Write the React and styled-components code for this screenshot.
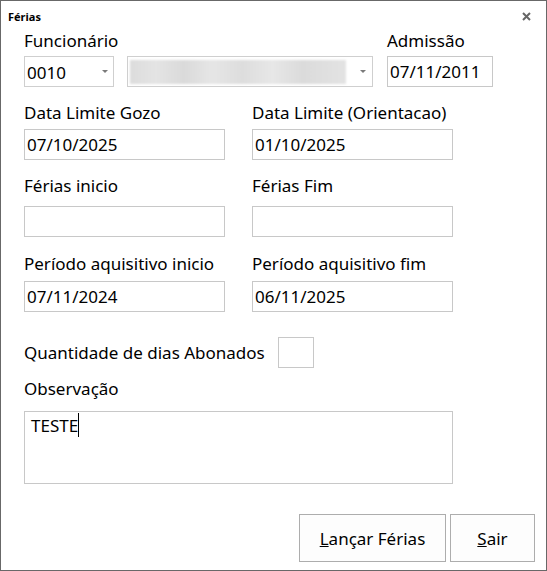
import styled, { createGlobalStyle } from 'styled-components';

const GlobalStyle = createGlobalStyle`
  html, body {
    margin: 0;
    padding: 0;
    background: #fff;
  }
  body {
    font-family: "Noto Sans", sans-serif;
    color: #000;
  }
`;

const Window = styled.div`
  box-sizing: border-box;
  width: 547px;
  height: 571px;
  border: 1px solid #686868;
  background: #fff;
  display: flex;
  flex-direction: column;
`;

const TitleBar = styled.div`
  height: 30px;
  display: flex;
  align-items: center;
  justify-content: space-between;
  padding: 0 15px 0 7px;
`;

const Title = styled.span`
  font-size: 11px;
  font-weight: 700;
`;

const CloseButton = styled.span`
  display: flex;
  width: 9px;
  height: 9px;
`;

const Body = styled.div`
  flex: 1;
  display: flex;
  flex-direction: column;
  padding: 0 11px 8px 23px;
`;

const Row = styled.div`
  display: flex;
  align-items: ${(p) => p.$align || 'flex-start'};
  gap: ${(p) => p.$gap ?? 27}px;
  margin-top: ${(p) => p.$top || 0}px;
`;

const Field = styled.div`
  display: flex;
  flex-direction: column;
`;

const Label = styled.label`
  display: block;
  font-size: 17px;
  line-height: 20px;
  margin-bottom: ${(p) => p.$gap ?? 6}px;
  width: ${(p) => (p.$width ? `${p.$width}px` : 'auto')};
`;

const Input = styled.input`
  box-sizing: border-box;
  width: ${(p) => p.$width || 201}px;
  height: 31px;
  border: 1px solid #c8c8c8;
  padding: 0 2px;
  margin: 0;
  font-family: "Noto Sans", sans-serif;
  font-size: 17px;
  color: #000;
  background: #fff;
  outline: none;
`;

const Combos = styled.div`
  display: flex;
  gap: 13px;
`;

const Combo = styled.div`
  box-sizing: border-box;
  width: ${(p) => p.$width}px;
  height: 31px;
  border: 1px solid #cfcfcf;
  display: flex;
  align-items: center;
  justify-content: space-between;
  padding: 2px ${(p) => p.$arrowGap ?? 5}px 0 2px;
  font-size: 17px;
`;

const Arrow = styled.span`
  width: 0;
  height: 0;
  border-left: 3px solid transparent;
  border-right: 3px solid transparent;
  border-top: 3px solid #7a7a7a;
  margin-top: -2px;
`;

const BlurredName = styled.div`
  width: 216px;
  height: 24px;
  margin-top: -2px;
  background: linear-gradient(
    90deg,
    #dcdcdc 0%,
    #e4e4e4 12%,
    #dadada 25%,
    #e6e6e6 38%,
    #dddddd 52%,
    #e7e7e7 66%,
    #dbdbdb 80%,
    #e3e3e3 100%
  );
  filter: blur(1px);
`;

const QuantityBox = styled.div`
  box-sizing: border-box;
  width: 36px;
  height: 31px;
  border: 1px solid #c8c8c8;
`;

const Memo = styled.div`
  box-sizing: border-box;
  width: 429px;
  height: 73px;
  border: 1px solid #c8c8c8;
  padding: 4px 6px;
  font-size: 17px;
  line-height: 20px;
`;

const Caret = styled.span`
  display: inline-block;
  width: 1px;
  height: 24px;
  background: #000;
  vertical-align: top;
  margin-top: -3px;
`;

const Footer = styled.div`
  margin-top: auto;
  display: flex;
  justify-content: flex-end;
  gap: 4px;
`;

const Button = styled.button`
  box-sizing: border-box;
  width: ${(p) => p.$width}px;
  height: 48px;
  border: 1px solid #adadad;
  background: #fdfdfd;
  font-family: "Noto Sans", sans-serif;
  font-size: 17px;
  color: #000;
  padding: 0;
  cursor: pointer;
`;

export default function App() {
  return (
    <>
      <GlobalStyle />
      <Window>
        <TitleBar>
          <Title>Férias</Title>
          <CloseButton>
            <svg width="9" height="9" viewBox="0 0 9 9">
              <path d="M1 1 L8 8 M8 1 L1 8" stroke="#666" strokeWidth="2" />
            </svg>
          </CloseButton>
        </TitleBar>
        <Body>
          <Row $gap={14}>
            <Field>
              <Label $gap={5}>Funcionário</Label>
              <Combos>
                <Combo $width={90}>
                  0010
                  <Arrow />
                </Combo>
                <Combo $width={246} $arrowGap={6}>
                  <BlurredName />
                  <Arrow />
                </Combo>
              </Combos>
            </Field>
            <Field>
              <Label $gap={5}>Admissão</Label>
              <Input $width={106} readOnly value="07/11/2011" />
            </Field>
          </Row>

          <Row $top={16}>
            <Field>
              <Label>Data Limite Gozo</Label>
              <Input readOnly value="07/10/2025" />
            </Field>
            <Field>
              <Label>Data Limite (Orientacao)</Label>
              <Input readOnly value="01/10/2025" />
            </Field>
          </Row>

          <Row $top={16}>
            <Field>
              <Label $gap={10}>Férias inicio</Label>
              <Input readOnly value="" />
            </Field>
            <Field>
              <Label $gap={10}>Férias Fim</Label>
              <Input readOnly value="" />
            </Field>
          </Row>

          <Row $top={17}>
            <Field>
              <Label $gap={7}>Período aquisitivo inicio</Label>
              <Input readOnly value="07/11/2024" />
            </Field>
            <Field>
              <Label $gap={7}>Período aquisitivo fim</Label>
              <Input readOnly value="06/11/2025" />
            </Field>
          </Row>

          <Row $top={25} $gap={0} $align="center">
            <Label $gap={0} $width={254}>Quantidade de dias Abonados</Label>
            <QuantityBox />
          </Row>

          <Row $top={11}>
            <Field>
              <Label $gap={12}>Observação</Label>
              <Memo>
                TESTE
                <Caret />
              </Memo>
            </Field>
          </Row>

          <Footer>
            <Button $width={147}>
              <u>L</u>ançar Férias
            </Button>
            <Button $width={85}>
              <u>S</u>air
            </Button>
          </Footer>
        </Body>
      </Window>
    </>
  );
}
